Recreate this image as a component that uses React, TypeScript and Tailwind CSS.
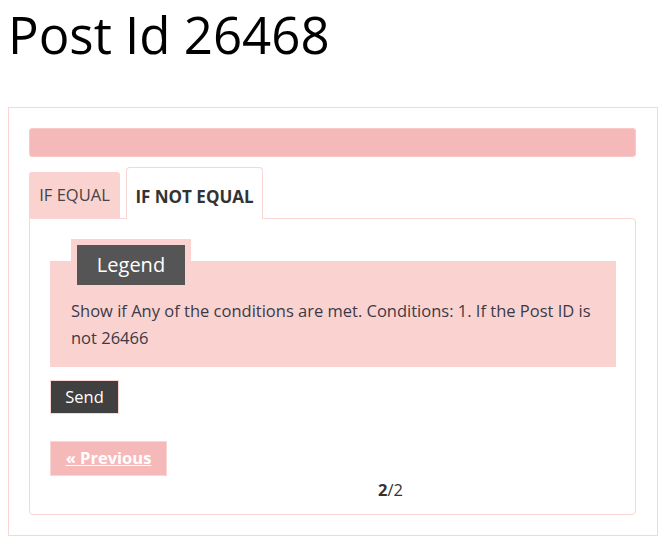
export default function App() {
  return (
    <div className="min-h-[548px] bg-white pt-[6px] text-[#333] [font-family:'Open_Sans',sans-serif]">
      <h1 className="ml-2 text-[51px] font-normal leading-[56px] text-black">Post Id 26468</h1>

      <div className="ml-2 mt-[45px] w-[650px] border border-[#f9d5d3] px-5 pb-5 pt-5">
        {/* Notice bar */}
        <div className="h-[29px] w-[607px] rounded-[3px] border border-[#f8c9c9] bg-[#f6b9ba]" />

        {/* Tabs */}
        <div className="mt-[10px] flex items-end gap-[6px]">
          <div className="flex h-[46px] w-[91px] items-center justify-center rounded-t-[3px] bg-[#fad3d0] text-[16.5px] text-[#444]">
            IF EQUAL
          </div>
          <div className="-mb-px flex h-[52px] w-[137px] items-center justify-center rounded-t-[4px] border border-b-0 border-[#f9d5d3] bg-white pt-[6px] text-[17px] font-bold text-[#333]">
            IF NOT EQUAL
          </div>
        </div>

        {/* Tab panel */}
        <div className="w-[607px] rounded-b-[4px] rounded-tr-[4px] border border-[#f9d5d3] px-5 pb-[13px] pt-5">
          <div className="w-[566px]">
            <div className="relative z-10 ml-[21px] w-[120px] bg-[#fad3d0] p-[6px]">
              <div className="flex h-10 items-center justify-center bg-[#555] text-[20px] text-white">Legend</div>
            </div>
            <div className="-mt-[30px] bg-[#fad3d0] px-[21px] pb-[16px] pt-[36px] text-[16.5px] leading-[27px] text-[#3a3a48]">
              Show if Any of the conditions are met. Conditions: 1. If the Post ID is not 26466
            </div>
          </div>

          <button className="mt-[13px] flex h-[34px] w-[69px] items-center justify-center border border-[#f9d5d3] bg-[#404040] text-[16.5px] text-white">
            Send
          </button>

          <button className="mt-[27px] flex h-[35px] w-[117px] items-center justify-center border border-[#f9d5d3] bg-[#f6b9ba] text-[16.5px] font-bold text-white underline">
            « Previous
          </button>

          <div className="ml-[328px] mt-[3px] text-[16.5px] leading-[22px] text-[#333]">
            <b>2</b>/2
          </div>
        </div>
      </div>
    </div>
  );
}
